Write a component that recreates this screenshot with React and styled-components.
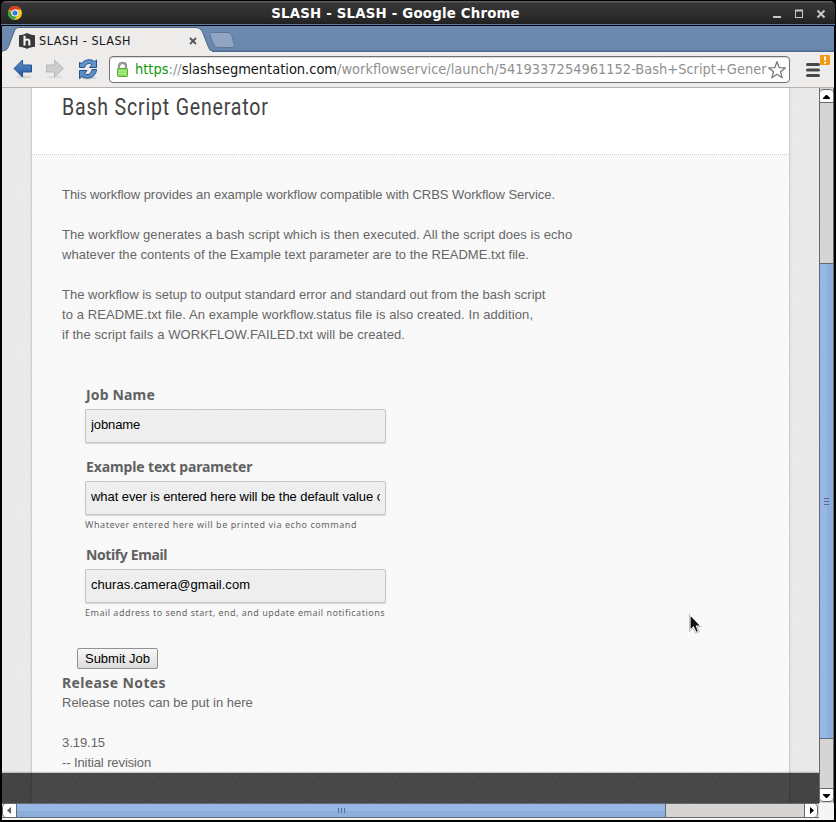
import React from 'react';
import styled, { createGlobalStyle } from 'styled-components';

const grain = (opacity) =>
  `url("data:image/svg+xml,%3Csvg xmlns='http://www.w3.org/2000/svg' width='160' height='160'%3E%3Cfilter id='n'%3E%3CfeTurbulence type='fractalNoise' baseFrequency='.55' numOctaves='2' stitchTiles='stitch'/%3E%3CfeColorMatrix values='0 0 0 0 0 0 0 0 0 0 0 0 0 0 0 1.6 0 0 0 -.65'/%3E%3C/filter%3E%3Crect width='160' height='160' filter='url(%23n)' opacity='${opacity}'/%3E%3C/svg%3E")`;

const Global = createGlobalStyle`
  * { box-sizing: border-box; }
  body { margin: 0; overflow: hidden; background: #000; }
`;

const Window = styled.div`
  width: 836px;
  height: 822px;
  padding: 0 2px 2px;
  display: flex;
  flex-direction: column;
  background: #000;
  border-radius: 5px 5px 0 0;
`;
const TitleBar = styled.header`
  height: 26px;
  flex: none;
  margin: 0 -1px;
  display: grid;
  grid-template-columns: 60px 1fr 60px;
  align-items: center;
  padding: 0 9px 0 6px;
  border-top: 1px solid #000;
  border-bottom: 1px solid #000;
  border-radius: 5px 5px 0 0;
  background: linear-gradient(#5c5c5c 0 1px, #363636 2px, #2f2f2f 50%, #232323 22px, #1b1b1b 23px, #577da7 23px);
`;
const WindowTitle = styled.div`
  text-align: center;
  padding: 1px 42px 0 0;
  color: #fff;
  font: bold 13.33px/22px "DejaVu Sans", sans-serif;
  letter-spacing: 0.2px;
  white-space: nowrap;
`;
const WindowButtons = styled.svg`
  justify-self: end;
  display: block;
`;
const TabStrip = styled.div`
  height: 26px;
  flex: none;
  background: linear-gradient(#6c8bb0, #6987ad 24px, #4e6a8c 25px);
`;
const TabShape = styled.svg`
  display: block;
`;
const Tab = styled.div`
  height: 26px;
  display: grid;
  grid-template-columns: 240px;
  > * { grid-area: 1 / 1; }
`;
const TabContent = styled.div`
  display: flex;
  align-items: center;
  padding: 3px 0 0 17px;
  gap: 4px;
  width: 195px;
  height: 26px;
  color: #161616;
  font: 12.5px/18px "DejaVu Sans Condensed", "DejaVu Sans", sans-serif;
  letter-spacing: 0.53px;
  white-space: nowrap;
  > span { flex: 1; }
`;
const Toolbar = styled.div`
  height: 36px;
  flex: none;
  display: flex;
  align-items: center;
  background: #edecea;
  border-bottom: 1px solid #b3b1af;
`;
const NavIcons = styled.svg`
  flex: none;
  display: block;
`;
const AddressBar = styled.div`
  width: 681px;
  height: 27px;
  flex: none;
  display: flex;
  align-items: center;
  padding-left: 6px;
  border: 1px solid #747270;
  border-radius: 4px;
  background: #fff;
  box-shadow: inset 0 1px 1px #d9d9d9;
`;
const Url = styled.div`
  width: 632px;
  flex: none;
  margin: -2px 0 0 6px;
  overflow: hidden;
  white-space: pre;
  color: #909090;
  font: 14.47px/20px "DejaVu Sans Condensed", "DejaVu Sans", sans-serif;
`;
const Scheme = styled.span`
  color: #0b9a0b;
`;
const Host = styled.span`
  color: #151515;
`;
const Viewport = styled.div`
  flex: none;
  height: 715px;
  display: grid;
  grid-template-columns: 817px 15px;
`;
const Backdrop = styled.div`
  position: relative;
  height: 715px;
  overflow: hidden;
  padding: 0 29px;
  background: ${grain(0.045)} #ececec;
`;
const Page = styled.main`
  height: 715px;
  border: solid #cfcfcf;
  border-width: 0 1px;
  box-shadow: 0 0 2px rgba(0, 0, 0, 0.14);
  background: ${grain(0.025)} #fafafa;
  color: #666;
  font: 13px/20px "Liberation Sans", Arial, sans-serif;
`;
const PageHeader = styled.div`
  height: 67px;
  background: #fff;
  border-bottom: 1px dotted #d0d0d0;
  padding: 5px 30px 0;
`;
const PageTitle = styled.h1`
  margin: 0;
  color: #444;
  font: 400 23px/30px Roboto, sans-serif;
  letter-spacing: 0.95px;
  transform: scaleX(0.85);
  transform-origin: left;
  white-space: nowrap;
`;
const Content = styled.div`
  padding: 30px 30px 0;
`;
const Line = styled.div`
  height: 20px;
  white-space: pre;
  letter-spacing: ${(p) => p.$track || 0}px;
`;
const Form = styled.form`
  padding: 40px 0 0 23px;
`;
const Field = styled.div`
  height: ${(p) => p.$height}px;
`;
const Label = styled.label`
  display: block;
  height: 24px;
  padding-left: 1px;
  color: #616161;
  font: bold 14px/20px "Noto Sans", sans-serif;
  letter-spacing: ${(p) => p.$track}px;
`;
const Input = styled.input`
  display: block;
  width: 301px;
  height: 34px;
  padding: 0 5px 3px;
  border: 1px solid #c6c6c6;
  border-radius: 2px;
  outline: 0;
  background: ${grain(0.03)} #f0f0f0;
  box-shadow: 0 1px 1px #d5d5d5;
  color: #000;
  font: 13px "Liberation Sans", Arial, sans-serif;
  letter-spacing: ${(p) => p.$track}px;
`;
const Hint = styled.div`
  height: 20px;
  color: #666;
  font: 9px/20px "Noto Sans", sans-serif;
  letter-spacing: ${(p) => p.$track}px;
  white-space: nowrap;
`;
const Submit = styled.button`
  display: block;
  width: 81px;
  height: 21px;
  margin: 15px 0 4px -8px;
  padding: 0;
  border: 1px solid #929292;
  border-radius: 2px;
  background: linear-gradient(#f8f8f8, #dcdcdc);
  color: #000;
  font: 13px/18px "Liberation Sans", Arial, sans-serif;
`;
const NotesTitle = styled.h2`
  margin: 0;
  color: #616161;
  font: bold 14px/20px "Noto Sans", sans-serif;
  letter-spacing: 0.38px;
`;
const FooterShade = styled.div`
  position: absolute;
  inset: auto 0 0;
  height: 30px;
  background: ${grain(0.15)} rgba(0, 0, 0, 0.7);
  box-shadow: 0 0 2px rgba(0, 0, 0, 0.6);
`;
const Pointer = styled.svg`
  position: absolute;
  left: 686px;
  top: 525px;
`;
const VScroll = styled.div`
  height: 715px;
  display: flex;
  flex-direction: column;
  padding-top: 1px;
  border: solid #626a73;
  border-width: 0 1px;
  background: #d6d5d3;
`;
const HScroll = styled.div`
  width: 817px;
  height: 15px;
  display: flex;
  border: solid #626a73;
  border-width: 1px 0;
  background: #d6d5d3;
`;
const Gap = styled.div`
  flex: none;
  ${(p) => (p.$vertical ? 'height' : 'width')}: ${(p) => p.$size}px;
`;
const Thumb = styled.div`
  flex: none;
  display: flex;
  align-items: center;
  justify-content: center;
  border: solid #626a73;
  ${(p) =>
    p.$vertical
      ? 'height: 476px; border-width: 1px 0; background: linear-gradient(90deg, #97b8e6 54%, #8daedb 54%);'
      : 'width: 650px; border-width: 0 1px; background: linear-gradient(#97b8e6 54%, #8daedb 54%);'}
`;
const ArrowButton = styled.div`
  flex: none;
  display: flex;
  align-items: center;
  justify-content: center;
  width: ${(p) => (p.$side ? 14 : 13)}px;
  height: ${(p) => (p.$side ? 13 : 14)}px;
  background: #fff;
  border: 0 solid #626a73;
  border-radius: ${(p) => ({ up: '4px 4px 0 0', down: '0 0 4px 4px', left: '4px 0 0 4px', right: '0 4px 4px 0' })[p.$dir]};
  ${(p) => ({ up: 'border-width: 1px 0', down: 'border-width: 1px 0', left: 'border-left-width: 1px', right: 'border-width: 0 1px' })[p.$dir]};
`;
const BottomRow = styled.div`
  flex: none;
  height: 17px;
  background: #f5f5f3;
`;

const arrows = {
  up: 'M0 6h7v-1l-3-3h-1l-3 3z',
  down: 'M0 2h7v1l-3 3h-1l-3-3z',
  left: 'M5 0v7L1 3.500z',
  right: 'M2 0v7L6 3.500z',
};
const Arrow = ({ dir, color = '#000' }) => (
  <ArrowButton $dir={dir} $side={dir === 'left' || dir === 'right'}>
    <svg width="7" height="7"><path d={arrows[dir]} fill={color} /></svg>
  </ArrowButton>
);

const intro = [
  ['This workflow provides an example workflow compatible with CRBS Workflow Service.', -0.047],
  [''],
  ['The workflow generates a bash script which is then executed. All the script does is echo', 0.066],
  ['whatever the contents of the Example text parameter are to the README.txt file.', 0.039],
  [''],
  ['The workflow is setup to output standard error and standard out from the bash script', 0],
  ['to a README.txt file. An example workflow.status file is also created. In addition,', 0.087],
  ['if the script fails a WORKFLOW.FAILED.txt will be created.', 0.097],
];

export default function App() {
  return (
    <Window>
      <Global />
      <TitleBar>
        <svg width="16" height="16" viewBox="0 0 16 16">
          <circle cx="8" cy="8" r="7" fill="#f2c928" />
          <path d="M8 8L1.900 4.500A7 7 0 0 1 14.100 4.600H8z" fill="#d93a2c" />
          <path d="M1.900 4.500A7 7 0 0 0 7.200 15L10.800 9.600 8 8 5 9.600z" fill="#3ea044" />
          <circle cx="8" cy="8" r="3.500" fill="#fff" />
          <circle cx="8" cy="8" r="2.600" fill="#3878d8" />
        </svg>
        <WindowTitle>SLASH - SLASH - Google Chrome</WindowTitle>
        <WindowButtons width="56" height="14" fill="none" stroke="#c9c9c9">
          <path d="M3 11h8" strokeWidth="2" />
          <rect x="25.500" y="4.500" width="7" height="7" />
          <path d="M25 4.500h8" strokeWidth="2" />
          <path d="M47.500 4.500l7 7m0-7l-7 7" strokeWidth="2" />
        </WindowButtons>
      </TitleBar>
      <TabStrip>
        <Tab>
          <TabShape width="240" height="26">
            <path d="M0 25C5 25 6 22 7.500 18L12 6C13 3 14 1.500 17 1.500H193C197 1.500 199 3 200.500 6L206 20C207.500 24 208 25.500 212 25.500V26H0z" fill="#edecea" stroke="#4b6382" />
            <path d="M1 26h209" stroke="#edecea" strokeWidth="2" />
            <path d="M210 6.500H225C228 6.500 229 8 230 10L232 18C233 20 231 21.500 229 21.500H217C214 21.500 212.500 20 211.500 18L208 9C207.500 7.500 208 6.500 210 6.500z" fill="#8fa5c2" stroke="#5f7797" />
          </TabShape>
          <TabContent>
            <svg width="16" height="16" viewBox="0 0 16 16">
              <path d="M8 0C10 1.300 13 2 16 2.200V13.800C13 14 10 14.700 8 16C6 14.700 3 14 0 13.800V2.200C3 2 6 1.300 8 0z" fill="#393939" />
              <path d="M5.500 2.800V12.500M5.500 8C6.300 6 10.300 5.800 10.300 8.300V12.500" fill="none" stroke="#f3f3f3" strokeWidth="2.100" />
            </svg>
            <span>SLASH - SLASH</span>
            <svg width="8" height="8"><path d="M1 1l6 6m0-6L1 7" stroke="#555" strokeWidth="1.800" /></svg>
          </TabContent>
        </Tab>
      </TabStrip>
      <Toolbar>
        <NavIcons width="107" height="35">
          <defs>
            <linearGradient id="blue" x2="0" y2="1"><stop stopColor="#5d93cf" /><stop offset="1" stopColor="#24549a" /></linearGradient>
          </defs>
          <ellipse cx="22" cy="25" rx="8" ry="1.500" fill="#d6d5d3" />
          <ellipse cx="53" cy="25" rx="8" ry="1.500" fill="#dedddb" />
          <ellipse cx="86" cy="26" rx="9" ry="1.500" fill="#d6d5d3" />
          <path d="M12 16.500L20.500 8V13H29.500V20H20.500V25z" fill="url(#blue)" stroke="#24508f" />
          <path d="M61.500 16.500L52.500 8V13H44.500V20H52.500V25z" fill="#cbcccb" stroke="#b8b9b9" />
          <path d="M77.500 15.500V10.500L80 11.500C82 7.500 89 6.500 92.500 9.500L94.500 8V15.500H87.500L90 12.500C87 10.500 84 11.500 82.500 15.500z" fill="#6294ca" stroke="#24508f" />
          <path d="M94.500 17.500C94 26 85 28 80 24.500L77.500 26.500V18.500H85L82.500 21.500C86 24 89 22 90 17.500z" fill="#5c8fc8" stroke="#24508f" />
        </NavIcons>
        <AddressBar>
          <svg width="13" height="17" viewBox="0 0 13 17">
            <path d="M3 9V5C3 .700 10 .700 10 5V9" fill="none" stroke="#777" strokeWidth="2.200" />
            <path d="M3 9V5C3 .700 10 .700 10 5V9" fill="none" stroke="#ccc" strokeWidth=".8" />
            <rect x="1.500" y="7.500" width="10" height="8" rx=".8" fill="#8fdc62" stroke="#58a634" />
            <path d="M2 10h9M2 12.500h9" stroke="#b4ee8e" />
          </svg>
          <Url><Scheme>https</Scheme>://<Host>slashsegmentation.com</Host>/workflowservice/launch/5419337254961152-Bash+Script+Gener</Url>
          <svg width="20" height="20" viewBox="0 0 20 20">
            <path d="M10 1.700L12.200 7.600 18.300 7.900 13.500 11.700 15.200 17.800 10 14.300 4.800 17.800 6.500 11.700 1.700 7.900 7.800 7.600z" fill="#fff" stroke="#777" strokeWidth="1.300" strokeLinejoin="round" />
          </svg>
        </AddressBar>
        <NavIcons width="43" height="35">
          <path d="M17.500 12.500h11M17.500 18h11M17.500 23.500h11" stroke="#484848" strokeWidth="3" strokeLinecap="round" />
          <rect x="30" y="3" width="10" height="10" rx="1" fill="#f29a13" />
          <path d="M35 4.500v4M35 10v1.500" stroke="#fff" strokeWidth="2" />
        </NavIcons>
      </Toolbar>
      <Viewport>
        <Backdrop>
          <Page>
            <PageHeader><PageTitle>Bash Script Generator</PageTitle></PageHeader>
            <Content>
              {intro.map(([text, track], i) => <Line key={i} $track={track}>{text}</Line>)}
              <Form>
                <Field $height={72}>
                  <Label $track={0.16}>Job Name</Label>
                  <Input $track={-0.1} defaultValue="jobname" />
                </Field>
                <Field $height={88}>
                  <Label $track={-0.13}>Example text parameter</Label>
                  <Input $track={-0.065} defaultValue="what ever is entered here will be the default value of the text" />
                  <Hint $track={0.55}>Whatever entered here will be printed via echo command</Hint>
                </Field>
                <Field $height={88}>
                  <Label $track={-0.39}>Notify Email</Label>
                  <Input $track={0.026} defaultValue="churas.camera@gmail.com" />
                  <Hint $track={0.486}>Email address to send start, end, and update email notifications</Hint>
                </Field>
                <Submit type="button">Submit Job</Submit>
              </Form>
              <NotesTitle>Release Notes</NotesTitle>
              <Line>Release notes can be put in here</Line>
              <Line />
              <Line $track={-0.05}>3.19.15</Line>
              <Line $track={-0.1}>-- Initial revision</Line>
            </Content>
          </Page>
          <FooterShade />
          <Pointer width="14" height="22">
            <path d="M2 1.500V17.500L5.500 14 8 19.500 10.500 18.500 8.500 13H13z" fill="#111" stroke="#fff" strokeWidth="1.200" />
            <path d="M1.500 1V18.500L5.300 15 7.600 20.300 11.300 18.600 9.200 13.500H13.800" fill="none" stroke="#999" strokeWidth=".6" />
          </Pointer>
        </Backdrop>
        <VScroll>
          <Arrow dir="up" />
          <Gap $vertical $size={160} />
          <Thumb $vertical>
            <svg width="5" height="7"><path d="M0 .5h5M0 3.500h5M0 6.500h5" stroke="#566b8c" /></svg>
          </Thumb>
          <Gap $vertical $size={49} />
          <Arrow dir="down" />
        </VScroll>
      </Viewport>
      <BottomRow>
        <HScroll>
          <Arrow dir="left" color="#555d66" />
          <Thumb>
            <svg width="7" height="5"><path d="M.5 0v5M3.500 0v5M6.500 0v5" stroke="#566b8c" /></svg>
          </Thumb>
          <Gap $size={138} />
          <Arrow dir="right" />
        </HScroll>
      </BottomRow>
    </Window>
  );
}
